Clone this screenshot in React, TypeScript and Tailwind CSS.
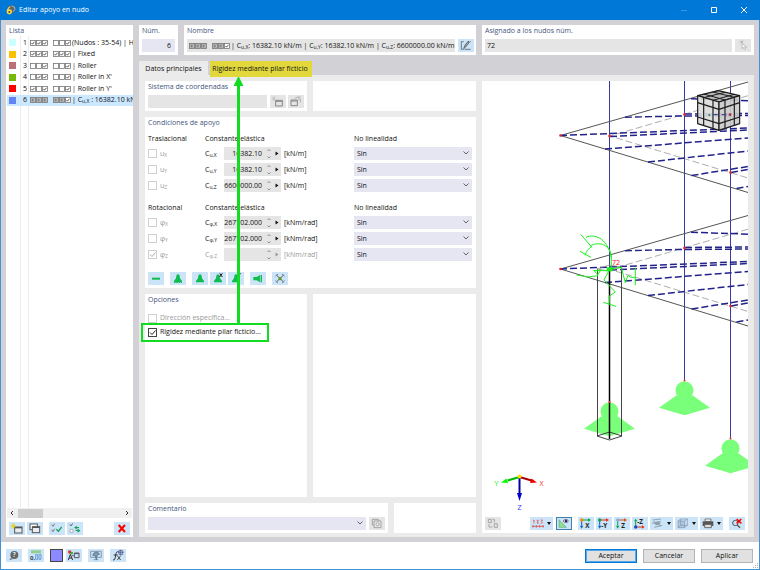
import type { ReactNode } from 'react';

type Mark = 'on' | 'off' | 'k';

const SUPPORTS: { id: number; color: string; marks: Mark[]; label: ReactNode; selected?: boolean }[] = [
  { id: 1, color: 'bg-[#ccffff]', marks: ['on', 'on', 'on', 'off', 'off', 'on'], label: '(Nudos : 35-54) | H' },
  { id: 2, color: 'bg-[#f8c200]', marks: ['on', 'on', 'on', 'on', 'on', 'on'], label: '| Fixed' },
  { id: 3, color: 'bg-[#bb6f77]', marks: ['off', 'off', 'on', 'off', 'off', 'on'], label: '| Roller' },
  { id: 4, color: 'bg-[#76b900]', marks: ['off', 'on', 'on', 'off', 'off', 'on'], label: "| Roller in X'" },
  { id: 5, color: 'bg-[#ff0000]', marks: ['on', 'off', 'on', 'off', 'off', 'on'], label: "| Roller in Y'" },
  {
    id: 6,
    color: 'bg-[#6384f5]',
    marks: ['k', 'k', 'k', 'k', 'k', 'on'],
    label: <>| <Sym base="C" sub="u,X" /> : 16382.10 kN</>,
    selected: true,
  },
];

const TRANSLATION = [
  { axis: 'X', value: '16382.10' },
  { axis: 'Y', value: '16382.10' },
  { axis: 'Z', value: '6600000.00' },
];

const ROTATION = [
  { axis: 'X', value: '267702.000' },
  { axis: 'Y', value: '267702.000' },
  { axis: 'Z', value: '', checked: true, disabled: true },
];

export default function App() {
  return (
    <div className="flex min-h-screen flex-col bg-[#4193d6] font-['Open_Sans','Noto_Sans',sans-serif] text-[7px] leading-[10px] font-medium text-[#111]">
      <TitleBar />
      <main className="mx-px flex flex-1 gap-[6px] bg-[#d1d1d6] px-[5px] py-[5px]">
        <SupportList />
        <div className="flex min-w-0 flex-1 flex-col gap-[6px]">
          <TopRow />
          <div className="relative flex flex-1 flex-col">
            <Tabs />
            <div className="flex flex-1 gap-[6px] bg-[#ebebeb] px-[6px] pt-[6px] pb-1">
              <div className="flex w-[331px] shrink-0 flex-col gap-[6px]">
                <div className="flex gap-[6px]">
                  <CoordinateSystem />
                  <div className="flex-1 bg-white" />
                </div>
                <Conditions />
                <div className="flex flex-1 gap-[6px]">
                  <Options />
                  <div className="flex-1 bg-white" />
                </div>
                <div className="flex gap-[6px]">
                  <Comment />
                  <div className="flex-1 bg-white" />
                </div>
              </div>
              <Viewport />
            </div>
            <Callout />
          </div>
        </div>
      </main>
      <Footer />
    </div>
  );
}

function TitleBar() {
  return (
    <header className="flex h-5 items-center bg-[#0078d7] pr-3 pl-[6px] text-white">
      <svg viewBox="0 0 30 30" className="size-[10px]">
        <circle cx="17" cy="12" r="11" fill="#5d6670" />
        <path d="M17 3l8 3 2 7-5 7" fill="none" stroke="#a8b3bd" strokeWidth="3" />
        <path d="M12 4C5 8 2 14 2 20c0 5 4 8 8 8s8-3 8-8-4-7-8-7c-1 0-2 0-3 1 1-3 3-6 7-8z" fill="#ffd83a" />
        <circle cx="10" cy="21" r="3" fill="#4a5058" />
      </svg>
      <h1 className="ml-[3px] font-medium">Editar apoyo en nudo</h1>
      <div className="ml-auto flex gap-[22px]">
        <button aria-label="Minimizar">
          <svg viewBox="0 0 8 8" className="size-2"><path d="M1 4.500h6" stroke="#3b97e0" /></svg>
        </button>
        <button aria-label="Maximizar">
          <svg viewBox="0 0 8 8" className="size-2"><path d="M1.500 1.500h5v5h-5z" fill="none" stroke="#fff" /></svg>
        </button>
        <button aria-label="Cerrar">
          <svg viewBox="0 0 8 8" className="size-2"><path d="M1 1l6 6M7 1L1 7" stroke="#fff" /></svg>
        </button>
      </div>
    </header>
  );
}

function SupportList() {
  return (
    <section className="flex w-[127px] shrink-0 flex-col bg-white">
      <Heading className="mt-px ml-[3px]">Lista</Heading>
      <div className="flex flex-1 flex-col bg-[linear-gradient(90deg,transparent_14px,#ececec_14px,#ececec_15px,transparent_15px,transparent_22px,#ececec_22px,#ececec_23px,transparent_23px)]">
        <ul className="mt-px grid h-[69px] grid-rows-6 pl-px">
          {SUPPORTS.map(s => (
            <li key={s.id} className={`flex items-center overflow-hidden whitespace-nowrap ${s.selected ? 'bg-[#cce8ff]' : ''}`}>
              <span className={`ml-[2px] size-[7px] shrink-0 ${s.color}`} />
              <span className="w-[11px] shrink-0 text-right">{s.id}</span>
              <Marks marks={s.marks} className="mr-px ml-[3px]" />
              <span>{s.label}</span>
            </li>
          ))}
        </ul>
      </div>
      <div className="mx-px mb-1 flex h-[10px] items-center bg-[#f0f0f0]">
        <svg viewBox="0 0 10 10" className="size-[10px]"><path d="M6 3L4 5l2 2" fill="none" stroke="#333" /></svg>
        <div className="ml-px h-[9px] w-[25px] bg-[#cdcdcd]" />
        <svg viewBox="0 0 10 10" className="ml-auto size-[10px]"><path d="M4 3l2 2-2 2" fill="none" stroke="#333" /></svg>
      </div>
      <div className="mb-[2px] flex px-[3px]">
        <IconButton label="Nuevo">
          <rect x="17" y="15" width="22" height="18" fill="#e8eef2" stroke="#555" strokeWidth="3" />
          <path d="M17 17h22" stroke="#555" strokeWidth="4" />
          <path d="M13 4v16M5 12h16M8 7l10 10M18 7L8 17" stroke="#e2d400" strokeWidth="2.500" />
        </IconButton>
        <IconButton label="Copiar" className="ml-[2px]">
          <rect x="9" y="6" width="22" height="17" fill="#fff" stroke="#555" strokeWidth="3" />
          <rect x="16" y="14" width="22" height="18" fill="#e8eef2" stroke="#555" strokeWidth="3" />
          <path d="M16 16h22" stroke="#555" strokeWidth="4" />
        </IconButton>
        <IconButton label="Seleccionar todo" className="ml-[6px]">
          <path d="M8 8l4 5 5-8M8 23l4 6 5-9" fill="none" stroke="#666" strokeWidth="2.500" />
          <path d="M22 22l6 6 10-13" fill="none" stroke="#10a060" strokeWidth="4" />
        </IconButton>
        <IconButton label="Invertir selección" className="ml-[2px]">
          <path d="M8 7l4 5 5-8" fill="none" stroke="#555" strokeWidth="2.500" />
          <path d="M9 22h9v9H9z" fill="#fff" stroke="#999" strokeWidth="2" />
          <path d="M24 17h12M38 25H26" fill="none" stroke="#10a060" strokeWidth="4" />
          <path d="M21 17l8-6v10zM40 26l-8 6V21z" fill="#10a060" />
        </IconButton>
        <IconButton label="Eliminar" className="ml-auto">
          <path d="M14 9l19 21M33 9L14 30" stroke="#f00" strokeWidth="6" />
        </IconButton>
      </div>
    </section>
  );
}

function TopRow() {
  return (
    <div className="flex h-[30px] gap-[6px]">
      <section className="w-[39px] shrink-0 bg-white px-[3px] pt-px">
        <label htmlFor="num" className="block text-[#44557e]">Núm.</label>
        <input id="num" defaultValue="6" className="mt-[3px] block h-[13px] w-full bg-[#e6e6f2] pr-1 text-right" />
      </section>
      <section className="w-[292px] shrink-0 bg-white px-[3px] pt-px">
        <Heading id="nombre">Nombre</Heading>
        <div className="mt-[3px] flex gap-[3px]">
          <div
            role="textbox"
            aria-readonly="true"
            aria-labelledby="nombre"
            className="flex h-[13px] flex-1 items-center bg-[#e5e5e5] pl-[2px] whitespace-nowrap"
          >
            <Marks marks={['k', 'k', 'k', 'k', 'k', 'on']} className="mr-px" />
            <span>
              | <Sym base="C" sub="u,X" />: 16382.10 kN/m | <Sym base="C" sub="u,Y" />: 16382.10 kN/m | <Sym base="C" sub="u,Z" />: 6600000.00 kN/m
            </span>
          </div>
          <IconButton label="Editar nombre">
            <path d="M17 8h-7v23h7M20 31h18" fill="none" stroke="#444" strokeWidth="2" />
            <path d="M17 29l3-9L30 7l4 3-11 14z" fill="#9aa" stroke="#444" strokeWidth="2" />
            <path d="M30 8h8" stroke="#444" strokeWidth="2" strokeDasharray="3 2" />
          </IconButton>
        </div>
      </section>
      <section className="min-w-0 flex-1 bg-white px-[3px] pt-px">
        <label htmlFor="nodes" className="block text-[#44557e]">Asignado a los nudos núm.</label>
        <div className="mt-[3px] flex gap-[3px]">
          <input id="nodes" defaultValue="72" className="h-[13px] min-w-0 flex-1 bg-[#e5e5e5] pl-[2px]" />
          <IconButton label="Seleccionar nudos" disabled>
            <path d="M16 5l8 8M24 5l-8 8" stroke="#888" strokeWidth="2" />
            <path d="M21 14v15l4-4 3 7 4-2-3-6h6z" fill="#fafafa" stroke="#aaa" strokeWidth="2" />
          </IconButton>
        </div>
      </section>
    </div>
  );
}

function Tabs() {
  return (
    <div role="tablist" className="flex h-[14px] items-start gap-[2px]">
      <button role="tab" aria-selected="true" className="h-[14px] w-[69px] bg-[#ebebeb] pt-[2px]">Datos principales</button>
      <button role="tab" aria-selected="false" className="relative h-4 w-[102px] bg-[#e2d83c] pr-[2px]">Rigidez mediante pilar ficticio</button>
    </div>
  );
}

function CoordinateSystem() {
  return (
    <section className="h-[30px] w-[162px] bg-white px-[3px] pt-px">
      <label htmlFor="coords" className="block text-[#44557e]">Sistema de coordenadas</label>
      <div className="mt-[3px] flex">
        <input id="coords" disabled className="h-[13px] min-w-0 flex-1 bg-[#e5e5e5]" />
        <IconButton label="Nuevo sistema" disabled className="ml-[3px]">
          <path d="M17 16h20v17H17zM17 19h20" fill="none" stroke="#888" strokeWidth="3" />
          <path d="M12 4v14M6 7l11 8M17 7L6 15" stroke="#aaa" strokeWidth="1.500" />
        </IconButton>
        <IconButton label="Editar sistema" disabled className="ml-[2px]">
          <path d="M9 15h19v17H9zM9 18h19" fill="none" stroke="#888" strokeWidth="3" />
          <path d="M20 10l9-4 3 5M30 6h8M31 12h6v10" fill="none" stroke="#999" strokeWidth="2" />
        </IconButton>
      </div>
    </section>
  );
}

function Conditions() {
  return (
    <section className="h-[171px] bg-white pt-px pr-1 pl-[3px]">
      <Heading>Condiciones de apoyo</Heading>
      <div className="mt-[6px]">
        <SpringGroup title="Traslacional" symbol="u" unit="[kN/m]" rows={TRANSLATION} />
      </div>
      <div className="mt-[11px]">
        <SpringGroup title="Rotacional" symbol="φ" unit="[kNm/rad]" rows={ROTATION} />
      </div>
      <div className="mt-[11px] flex">
        <IconButton label="Libre">
          <path d="M12 20h24" stroke="#0ebc50" strokeWidth="6" />
        </IconButton>
        <IconButton label="Empotrado" className="ml-[6px]">
          <SupportGlyph />
          <path d="M12 31h24" stroke="#0ebc50" strokeWidth="4" strokeDasharray="4 3" />
        </IconButton>
        <IconButton label="Articulado" className="ml-[6px]"><SupportGlyph /></IconButton>
        <IconButton label="Deslizante en X" className="ml-[2px]">
          <SupportGlyph />
          <path d="M29 4l8 11M37 4l-8 11" stroke="#222" strokeWidth="3" />
        </IconButton>
        <IconButton label="Deslizante en Y" className="ml-[2px]">
          <SupportGlyph />
          <path d="M30 4l4 5 4-5M34 9v5" fill="none" stroke="#222" strokeWidth="2.500" />
        </IconButton>
        <IconButton label="Deslizante lateral" className="ml-[6px]">
          <path d="M10 15h10l10-6h6v22h-6l-10-6H10z" fill="#0ebc50" />
          <path d="M31 8v24" stroke="#cce4f7" strokeWidth="2" />
        </IconButton>
        <IconButton label="Muelles" className="ml-[6px]">
          <path d="M13 9l22 21M35 9L13 30" stroke="#444" strokeWidth="2.500" />
          <path d="M10 13l8-7M30 6l8 7M10 26l8 7M30 33l8-7" stroke="#777" strokeWidth="2.500" />
          <circle cx="24" cy="20" r="5" fill="#5e9a35" />
        </IconButton>
      </div>
    </section>
  );
}

function SpringGroup({
  title,
  symbol,
  unit,
  rows,
}: {
  title: string;
  symbol: string;
  unit: string;
  rows: { axis: string; value: string; checked?: boolean; disabled?: boolean }[];
}) {
  return (
    <div>
      <div className="mb-[3px] flex">
        <span className="w-[57px]">{title}</span>
        <span className="w-[149px]">Constante elástica</span>
        <span>No linealidad</span>
      </div>
      <div className="space-y-[3px]">
        {rows.map(r => {
          const id = `${symbol}-${r.axis}`;
          const tone = r.disabled ? 'text-[#9a9a9a]' : '';
          return (
            <div key={r.axis} className="flex h-[13px] items-center">
              <label className="flex w-[57px] items-center gap-[3px] text-[#9a9a9a]">
                <Tick checked={r.checked} disabled />
                <Sym base={symbol} sub={r.axis} />
              </label>
              <label htmlFor={id} className={`w-[19px] ${tone}`}>
                <Sym base="C" sub={`${symbol},${r.axis}`} />
              </label>
              <div className="flex h-[13px] w-[57px] items-center bg-[#e5e5e5]">
                <input id={id} defaultValue={r.value} disabled={r.disabled} className="h-full w-[38px] text-right" />
                <svg viewBox="0 0 19 13" className={`h-[13px] w-[19px] ${tone}`}>
                  <path d="M5.500 4l1.500-1.500L8.500 4M5.500 9.500L7 11l1.500-1.500" fill="none" stroke="#777" strokeWidth=".8" />
                  <path d="M13.500 4.500v4l3-2z" fill="currentColor" />
                </svg>
              </div>
              <span className={`ml-[3px] w-[70px] ${tone}`}>{unit}</span>
              <Dropdown label={`No linealidad ${id}`} value="Sin" />
            </div>
          );
        })}
      </div>
    </div>
  );
}

function Options() {
  return (
    <section className="w-[162px] bg-white px-[3px] pt-px">
      <Heading>Opciones</Heading>
      <label className="mt-2 flex items-center gap-[3px] text-[#9a9a9a]">
        <Tick disabled />
        Dirección específica...
      </label>
      <label className="mt-1 flex items-center gap-[3px]">
        <Tick checked />
        Rigidez mediante pilar ficticio...
      </label>
    </section>
  );
}

function Comment() {
  return (
    <section className="h-[30px] w-[243px] bg-white px-[3px] pt-px">
      <Heading>Comentario</Heading>
      <div className="mt-[3px] flex gap-[3px]">
        <Dropdown label="Comentario" value="" />
        <IconButton label="Copiar comentario" disabled>
          <path d="M10 7h18v17H10z" fill="none" stroke="#999" strokeWidth="2.500" />
          <path d="M15 12h21v20H15z" fill="#e5e5e5" stroke="#999" strokeWidth="2.500" />
          <circle cx="26" cy="22" r="5" fill="none" stroke="#999" strokeWidth="2" />
        </IconButton>
      </div>
    </section>
  );
}

// Tab highlight arrow and frame drawn over the dialog
function Callout() {
  return (
    <div className="pointer-events-none absolute top-4 left-[2px] w-[128px]">
      <svg viewBox="0 0 128 248" className="block h-[248px] w-[128px]">
        <path d="M97.500 248V8" stroke="#12dc22" strokeWidth="3" />
        <path d="M97.500 -1l5 10h-10z" fill="#12dc22" />
      </svg>
      <div className="-mt-[2px] h-[19px] border-2 border-[#12dc22]" />
    </div>
  );
}

function Viewport() {
  return (
    <section className="flex min-w-0 flex-1 flex-col bg-white">
      <svg viewBox="482 81 266 433" preserveAspectRatio="xMidYMin slice" className="h-0 min-h-[433px] w-full flex-1" role="img" aria-label="Modelo">
        <Support x={609.5} y={411.3} />
        <Support x={684.5} y={390.3} />
        <Support x={730.5} y={448.3} />
        <g fill="none" stroke="#3a3aa0">
          <path d="M609.500 81V268M684.500 81V381M730.500 81V438" />
        </g>
        <Deck />
        <g transform="translate(0 133.500)"><Deck /></g>
        <g fill="none" stroke="#444">
          <path d="M597.500 269V436M621.500 266V436" strokeWidth="1" />
          <path d="M597 436l12.500-4 12.500 4-12.500 4z" />
          <path d="M597 269l12.500-4 12.500 2-12.500 4z" stroke="#888" strokeWidth=".7" />
          <path d="M609.500 268V439" stroke="#000" strokeWidth="1.500" />
        </g>
        <g fill="#e33">
          <circle cx="609.500" cy="402" r="1" />
          <circle cx="684.500" cy="380.500" r="1" />
          <circle cx="730.500" cy="438.500" r="1" />
        </g>
        {/* spring symbols at node 72 */}
        <g transform="translate(550 220) scale(.3333)" fill="none" stroke="#1cf01c" strokeWidth="3">
          <path d="M92 43l33 38M108 52c30-14 70 10 76 64M125 80c-10 6-16 14-20 26M90 94l33 18" />
          <path d="M120 78c30-16 60-2 64 30v38" />
          <path d="M80 165l34 6 30-4M130 150l14 14 8-14-20 2h46" />
          <path d="M178 150l-16 30 34 36-18 12v22M160 247l38 12" />
          <path d="M186 146l28-4 12 46 8-22 8 6h14M256 143v53" />
          <path d="M170 148h18" strokeWidth="12" />
        </g>
        <text x="612" y="265" fill="#f01010" fontSize="7">72</text>
        <NavCube />
        <g fontSize="7" textAnchor="middle">
          <path d="M519.500 477l12 3.500" stroke="#a00" strokeWidth="2" />
          <path d="M537 482.500l-7 .5 1.500-4.500z" fill="#e00" />
          <path d="M519.500 477l-12 3.500" stroke="#0b0" strokeWidth="2" />
          <path d="M501 482.500l7 .5-1.500-4.500z" fill="#0f0" />
          <path d="M519.500 477v17" stroke="#0000a8" strokeWidth="2" />
          <path d="M519.500 501l-2.500-8h5z" fill="#0000c8" />
          <circle cx="519.500" cy="476.500" r="2" fill="#fd0" />
          <text x="541.500" y="486" fill="#f22">X</text>
          <text x="496.500" y="486" fill="#0e0">Y</text>
          <text x="519.500" y="510" fill="#33f">Z</text>
        </g>
      </svg>
      <ViewToolbar />
    </section>
  );
}

function Deck() {
  return (
    <g fill="none">
      <path d="M748 95.700L610 136l138 42" stroke="#999" strokeWidth=".8" strokeDasharray="7 3" />
      <path d="M748 82L560.500 135.500 748 192.500" stroke="#555" />
      <g stroke="#22228c" strokeWidth="1.500" strokeDasharray="7 3">
        <path d="M691 98.700l57 2M625 117.300l60-1.500M685 114l63-.5M685 116l63-.5" />
        <path d="M560 135.500L748 128M610 136.500l138-6.500" />
        <path d="M605 149l143-11M648 162l100-11M691.500 175.500l56.500-9M731 172.500l17-3M736.500 188.500l11.500-2" />
      </g>
      <g fill="#e22">
        <circle cx="560.500" cy="135.500" r="1.300" />
        <circle cx="609.500" cy="136" r="1.300" />
        <circle cx="684.500" cy="114.500" r="1.300" />
        <circle cx="730.500" cy="172.500" r="1.300" />
      </g>
    </g>
  );
}

function Support({ x, y }: { x: number; y: number }) {
  return (
    <g transform={`translate(${x} ${y})`} fill="#7aff7a">
      <circle r="9" />
      <path d="M-8 5L-25.500 17.500 0 25l25.500-7.500L8 5z" />
    </g>
  );
}

function NavCube() {
  return (
    <g transform="translate(550 80) scale(.3333)" stroke="#1c1c1c" strokeWidth="3.500" strokeLinejoin="round">
      <path d="M443 47l62-15 64 15-62 19z" fill="#b8b8b8" />
      <path d="M443 47l64 19v85l-64-20z" fill="#dcdcdc" fillOpacity=".9" />
      <path d="M569 47l-62 19v85l62-20z" fill="#cacaca" fillOpacity=".9" />
      <path d="M461 53v83M489 61v84M525 60v85M553 52v84" fill="none" />
      <path d="M443 68l64 20 62-20M443 111l64 20 62-20" fill="none" />
      <path d="M461 42l64 18M489 36l64 16M553 43l-64 18M525 37l-64 16" fill="none" strokeWidth="3" />
      <circle cx="478" cy="105" r="3" fill="#2a8a50" stroke="none" />
      <circle cx="540" cy="104" r="4" fill="#a33" stroke="none" />
      <path d="M489 104h14M515 104h14" stroke="#44448c" strokeWidth="4" />
    </g>
  );
}

function ViewToolbar() {
  return (
    <div className="flex h-[19px] items-center px-[3px]">
      <IconButton label="Intercambiar" disabled>
        <path d="M10 7h9v10h-9zM28 20h9v11h-9zM23 7h5v9M12 22v8h10" fill="none" stroke="#999" strokeWidth="2.500" />
      </IconButton>
      <div className="flex-1" />
      <IconButton label="Numeración" menu>
        <path d="M6 28h36M9 24v8M19 24v8M29 24v8M39 24v8" stroke="#d33" strokeWidth="2" />
        <path d="M9 11l3-2v10M20 10h5l-4 8h6M32 9h5l-2 4 2 4-5 2" fill="none" stroke="#d33" strokeWidth="2" />
      </IconButton>
      <IconButton label="Mostrar ejes" pressed className="ml-[3px]">
        <path d="M9 8l22 23H9z" fill="#8ee08e" stroke="#4a9a6a" strokeWidth="1.500" />
        <path d="M21 12c5-6 12-6 17 0-5 6-12 6-17 0z" fill="#fff" stroke="#335" strokeWidth="2" />
        <circle cx="30" cy="12" r="4" fill="#336" />
      </IconButton>
      <AxisButton label="Vista X" text="X" h="#10a050" v="#1060c0" dot="#f09000" className="ml-[6px]" />
      <AxisButton label="Vista -Y" text="-Y" h="#e03010" v="#1060c0" dot="#10a050" className="ml-[2px]" />
      <AxisButton label="Vista Z" text="Z" h="#e05010" v="#10a050" dot="#8ab0e0" className="ml-[2px]" />
      <IconButton label="Vista -Z" className="ml-[2px]">
        <path d="M11 30V10" stroke="#10a050" strokeWidth="3" />
        <path d="M11 5l5 8H6z" fill="#10a050" />
        <path d="M11 30h20" stroke="#e03010" strokeWidth="3" />
        <path d="M38 30l-8-5v10z" fill="#e03010" />
        <circle cx="11" cy="30" r="5" fill="#1050c0" />
        <text x="16" y="20" fontSize="19" fontWeight="700" fill="#222">-Z</text>
      </IconButton>
      <IconButton label="Plano de trabajo" menu className="ml-[2px]">
        <path d="M8 9l25-3M6 19l27-5M13 31l24-6M10 13l22 14" fill="none" stroke="#8aa4b4" strokeWidth="3" />
        <path d="M12 16l14-3 6 9-15 3z" fill="#8f9fa9" />
      </IconButton>
      <IconButton label="Visualización" menu className="ml-[2px]">
        <path d="M9 12h20v20H9z" fill="#b4c8dc" />
        <path d="M9 12h20v20H9zM9 12l8-6h20l-8 6M37 6v19l-8 7M17 6v19H37M17 25l-8 7" fill="none" stroke="#7b92ad" strokeWidth="2" />
      </IconButton>
      <IconButton label="Imprimir" menu className="ml-[2px]">
        <path d="M15 6h18v7H15z" fill="#fff" stroke="#666" strokeWidth="2.500" />
        <path d="M8 13h32v14H8z" fill="#555" />
        <path d="M14 22h20v10H14z" fill="#ddd" stroke="#555" strokeWidth="2.500" />
      </IconButton>
      <IconButton label="Restablecer vista" className="ml-[6px]">
        <circle cx="19" cy="18" r="8" fill="none" stroke="#555" strokeWidth="3" />
        <path d="M25 24l8 8" stroke="#555" strokeWidth="4" />
        <path d="M23 6l14 13M37 6L23 19" stroke="#f00" strokeWidth="4.500" />
      </IconButton>
    </div>
  );
}

function AxisButton({ label, text, h, v, dot, className }: { label: string; text: string; h: string; v: string; dot: string; className: string }) {
  return (
    <IconButton label={label} className={className}>
      <path d="M11 9h20" stroke={h} strokeWidth="3" />
      <path d="M39 9l-9-5v10z" fill={h} />
      <path d="M11 9v17" stroke={v} strokeWidth="3" />
      <path d="M11 35l-5-9h10z" fill={v} />
      <circle cx="11" cy="9" r="5" fill={dot} />
      <text x={text.length > 1 ? 16 : 22} y="32" fontSize="19" fontWeight="700" fill="#222">{text}</text>
    </IconButton>
  );
}

function Footer() {
  return (
    <footer className="relative mx-px mb-px flex h-[27px] items-center bg-white pr-[6px] pl-[5px]">
      <IconButton label="Ayuda">
        <path d="M14 28l-4 5 11-3" fill="#555" />
        <circle cx="25" cy="18" r="12" fill="#666" />
        <text x="20" y="25" fontSize="19" fontWeight="700" fill="#dde6ee">?</text>
      </IconButton>
      <IconButton label="Unidades" className="ml-[6px]">
        <rect x="9" y="4" width="30" height="9" fill="#8fd08f" />
        <text x="6" y="32" fontSize="18" fontWeight="700" fill="#345">0,</text>
        <path d="M23 17h6v14h-6zM33 17h6v14h-6z" fill="none" stroke="#6a9bd8" strokeWidth="3" />
      </IconButton>
      <button aria-label="Color" className="ml-[6px] h-[13px] w-[13px] border border-[#444] bg-[#8b8bff]" />
      <IconButton label="Opciones de color" className="ml-[3px]">
        <circle cx="11" cy="9" r="5" fill="#d33" /><circle cx="17" cy="12" r="4" fill="#3a3" />
        <path d="M7 33l6-17 7 17M9 27h9" fill="none" stroke="#333" strokeWidth="3" />
        <path d="M25 12h14v14H25zM25 14h14M17 20h6" fill="none" stroke="#556" strokeWidth="3" />
      </IconButton>
      <IconButton label="Vista del modelo" className="ml-[6px]">
        <path d="M8 7h32v18H8zM17 32h14" fill="none" stroke="#7c8c9c" strokeWidth="2.500" />
        <path d="M14 19c2-11 16-14 21-3l-7 2-3 14-4-12z" fill="#7899b5" stroke="#456" strokeWidth="1.500" />
      </IconButton>
      <IconButton label="Fórmula" className="ml-[6px]">
        <path d="M9 33c7 1 6-6 8-14 1-8 3-12 9-11M11 18h12" fill="none" stroke="#333" strokeWidth="3" />
        <path d="M22 20l10 13M32 20L22 33" stroke="#333" strokeWidth="2.500" />
        <path d="M27 5h11v11H27zM32 2v17M24 10h17" fill="none" stroke="#448" strokeWidth="2" />
      </IconButton>
      <div className="ml-auto flex gap-[6px]">
        <button className="h-[14px] w-[52px] border border-[#0078d7] bg-[#e1e1e1] outline-1 -outline-offset-2 outline-[#5aa8e6]">Aceptar</button>
        <button className="h-[14px] w-[52px] border border-[#b4b4b4] bg-[#e1e1e1]">Cancelar</button>
        <button className="h-[14px] w-[52px] border border-[#b4b4b4] bg-[#e1e1e1]">Aplicar</button>
      </div>
      <svg viewBox="0 0 6 6" className="absolute right-0 bottom-0 size-[6px]">
        <path d="M4 0h1v1H4zM2 2h1v1H2zM4 2h1v1H4zM0 4h1v1H0zM2 4h1v1H2zM4 4h1v1H4z" fill="#b0b0b0" />
      </svg>
    </footer>
  );
}

function Heading({ children, className = '', id }: { children: ReactNode; className?: string; id?: string }) {
  return <h2 id={id} className={`font-medium text-[#44557e] ${className}`}>{children}</h2>;
}

function Sym({ base, sub }: { base: string; sub: string }) {
  return (
    <span>
      {base}
      <sub className="bottom-0 align-[-1px] text-[5px] leading-none">{sub}</sub>
    </span>
  );
}

function Marks({ marks, className = '' }: { marks: Mark[]; className?: string }) {
  return (
    <svg viewBox="0 0 41 6" className={`h-[6px] w-[41px] shrink-0 ${className}`} fill="none">
      {marks.map((m, i) => (
        <g key={i} transform={`translate(${i * 6 + (i > 2 ? 5 : 0)} 0)`}>
          <rect x=".5" y=".5" width="5" height="5" fill={m === 'k' ? '#bdbdbd' : '#fff'} stroke="#777" strokeWidth=".8" />
          {m === 'on' && <path d="M1.500 3l1 1.200 2-2.400" stroke="#333" strokeWidth=".8" />}
          {m === 'k' && <path d="M2.200 1.500v3M4 1.500L2.600 3 4 4.500" stroke="#555" strokeWidth=".6" />}
        </g>
      ))}
    </svg>
  );
}

function Tick({ checked, disabled }: { checked?: boolean; disabled?: boolean }) {
  return (
    <span className="relative size-[9px] shrink-0">
      <input
        type="checkbox"
        defaultChecked={checked}
        disabled={disabled}
        className={`block size-[9px] appearance-none border bg-white ${disabled ? 'border-[#cfcfcf]' : 'border-[#444]'}`}
      />
      {checked && (
        <svg viewBox="0 0 9 9" className="pointer-events-none absolute inset-0 size-[9px]">
          <path d="M2 4.500l2 2 3.500-4" fill="none" stroke={disabled ? '#aaa' : '#222'} />
        </svg>
      )}
    </span>
  );
}

function Dropdown({ label, value }: { label: string; value: string }) {
  return (
    <div className="relative h-[13px] flex-1">
      <select aria-label={label} className="block h-[13px] w-full appearance-none bg-[#e6e6f2] pl-[3px]">
        <option>{value}</option>
      </select>
      <svg viewBox="0 0 8 8" className="pointer-events-none absolute top-[2px] right-[2px] size-2">
        <path d="M1.500 2.500L4 5l2.500-2.500" fill="none" stroke="#555" strokeWidth=".9" />
      </svg>
    </div>
  );
}

function SupportGlyph() {
  return <path d="M24 7a5 5 0 0 1 5 5l1 7 6 8v4H12v-4l6-8 1-7a5 5 0 0 1 5-5z" fill="#0ebc50" />;
}

function IconButton({
  label,
  children,
  className = '',
  disabled,
  pressed,
  menu,
}: {
  label: string;
  children: ReactNode;
  className?: string;
  disabled?: boolean;
  pressed?: boolean;
  menu?: boolean;
}) {
  const tone = disabled ? 'bg-[#e5e5e5]' : 'bg-[#cce4f7]';
  return (
    <button
      aria-label={label}
      disabled={disabled}
      className={`flex h-[13px] shrink-0 items-center ${tone} ${pressed ? 'outline-1 -outline-offset-1 outline-[#3f7fae]' : ''} ${className}`}
    >
      <svg viewBox="0 0 48 39" className="h-[13px] w-4">{children}</svg>
      {menu && (
        <svg viewBox="0 0 7 5" className="h-[5px] w-[7px]"><path d="M1 1h4L3 4z" fill="#111" /></svg>
      )}
    </button>
  );
}
